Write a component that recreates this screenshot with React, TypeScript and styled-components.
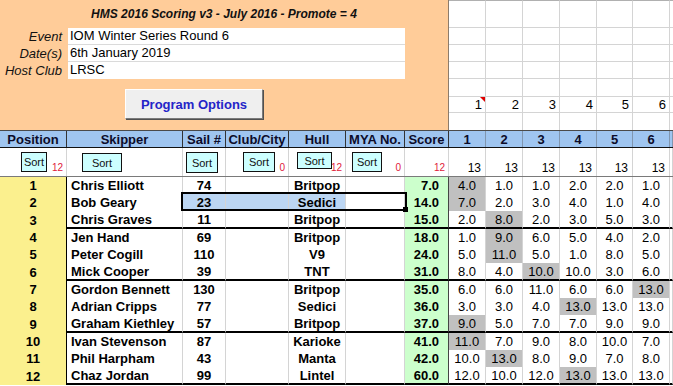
import styled, { createGlobalStyle } from "styled-components";

const GlobalStyle = createGlobalStyle`
  html, body {
    margin: 0;
    padding: 0;
    background: #fff;
  }
  body {
    font-family: "Liberation Sans", Arial, sans-serif;
    font-size: 13px;
    color: #000;
    overflow: hidden;
  }
  * {
    box-sizing: border-box;
  }
`;

const COLS =
  "67px 116px 43px 63px 57px 59px 44px 37px 37px 37px 37px 36px 37px 1fr";
const GRID = "#d4d4d4";

const Sheet = styled.div`
  position: relative;
  width: 673px;
  height: 386px;
  overflow: hidden;
  background: #fff;
`;

const Top = styled.div`
  display: flex;
  height: 130px;
`;

const Banner = styled.div`
  width: 449px;
  flex-shrink: 0;
  background: #ffcc99;
  border-right: 1px solid #8c7b6b;
  display: flex;
  flex-direction: column;
`;

const Title = styled.div`
  height: 28px;
  line-height: 28px;
  text-align: center;
  font-size: 12px;
  font-weight: bold;
  font-style: italic;
  color: #111;
`;

const InfoGrid = styled.div`
  display: grid;
  grid-template-columns: 68px 337px;
  grid-auto-rows: 17px;
`;

const InfoLabel = styled.div`
  text-align: right;
  padding-right: 6px;
  font-style: italic;
  line-height: 17px;
  color: #111;
`;

const InfoValue = styled.div<{ $last?: boolean }>`
  background: #fff;
  padding-left: 2px;
  line-height: 16px;
  border-bottom: 1px solid ${(p) => (p.$last ? "#fff" : "#dadada")};
`;

const OptionsButton = styled.button`
  margin: 10px 0 0 125px;
  width: 138px;
  height: 30px;
  padding: 0;
  background: #efefef;
  border: 1px solid;
  border-color: #fff #7a7a7a #7a7a7a #fff;
  box-shadow: 1px 1px 0 #505050;
  font-family: inherit;
  font-size: 13px;
  font-weight: bold;
  color: #2424c8;
`;

const CornerGrid = styled.div`
  flex: 1;
  display: grid;
  grid-template-columns: 37px 37px 37px 37px 36px 37px 1fr;
  grid-template-rows: 28px 17px 17px 17px 18px 16px 17px;
`;

const CornerCell = styled.div<{ $first?: boolean; $lastRow?: boolean }>`
  position: relative;
  border-right: 1px solid ${GRID};
  border-bottom: ${(p) => (p.$lastRow ? "none" : `1px solid ${GRID}`)};
  border-top: ${(p) => (p.$first ? "1px solid #b0b0b0" : "none")};
  text-align: right;
  padding-right: 3px;
  line-height: 16px;
`;

const CommentMark = styled.span`
  position: absolute;
  top: 0;
  right: 0;
  width: 0;
  height: 0;
  border-top: 5px solid #e00000;
  border-left: 5px solid transparent;
`;

const Row = styled.div<{ $h: number }>`
  display: grid;
  grid-template-columns: ${COLS};
  height: ${(p) => p.$h}px;
`;

const HeadRow = styled(Row)`
  background: #9fc5f0;
  border-top: 1px solid #4a4a4a;
  border-bottom: 1px solid #111;
`;

const HeadCell = styled.div<{ $soft?: boolean }>`
  display: flex;
  align-items: center;
  justify-content: center;
  font-weight: bold;
  color: #0c0c2a;
  border-right: 1px solid ${(p) => (p.$soft ? "#8096b0" : "#333")};
  white-space: nowrap;
`;

const SortRow = styled(Row)`
  border-bottom: 1px solid #7a7a7a;
`;

const SortCell = styled.div`
  display: grid;
  border-right: 1px solid ${GRID};
`;

const SortButton = styled.div<{ $x: number; $y: number; $w: number; $h: number }>`
  grid-area: 1 / 1;
  justify-self: start;
  align-self: start;
  margin-left: ${(p) => p.$x}px;
  margin-top: ${(p) => p.$y}px;
  width: ${(p) => p.$w}px;
  height: ${(p) => p.$h}px;
  background: #ccffff;
  border: 1px solid #111;
  font-size: 11px;
  display: flex;
  align-items: center;
  justify-content: center;
  color: #111;
`;

const Count = styled.span<{ $red?: boolean }>`
  grid-area: 1 / 1;
  justify-self: end;
  align-self: end;
  padding-right: ${(p) => (p.$red ? 3 : 4)}px;
  margin-bottom: 2px;
  font-size: ${(p) => (p.$red ? 10 : 12)}px;
  line-height: 12px;
  color: ${(p) => (p.$red ? "#e0203a" : "#000")};
`;

type Align = "left" | "center" | "right";

const Cell = styled.div<{
  $bg?: string;
  $align?: Align;
  $bold?: boolean;
  $end?: boolean;
  $edge?: string;
}>`
  display: flex;
  align-items: center;
  justify-content: ${(p) =>
    p.$align === "left" ? "flex-start" : p.$align === "right" ? "flex-end" : "center"};
  padding-left: ${(p) => (p.$align === "left" ? 4 : 0)}px;
  padding-right: ${(p) => (p.$align === "right" ? 9 : 0)}px;
  background: ${(p) => p.$bg ?? "transparent"};
  font-weight: ${(p) => (p.$bold ? "bold" : "normal")};
  border-right: 1px solid ${(p) => p.$edge ?? GRID};
  border-bottom: ${(p) => (p.$end ? "2px solid #000" : "none")};
  white-space: nowrap;
  overflow: hidden;
`;

const Selection = styled.div`
  position: absolute;
  left: 181px;
  top: 192px;
  width: 226px;
  height: 19px;
  border: 2px solid #000;
  pointer-events: none;
  &::after {
    content: "";
    position: absolute;
    right: -3px;
    bottom: -3px;
    width: 5px;
    height: 5px;
    background: #000;
  }
`;

const YELLOW = "#fbf08e";
const GREEN = "#ccffcc";
const GREY = "#c0c0c0";
const PICK = "#bcd6f3";

interface Entry {
  skipper: string;
  sail: string;
  hull: string;
  score: string;
  races: string[];
  drop: number;
}

const entries: Entry[] = [
  { skipper: "Chris Elliott", sail: "74", hull: "Britpop", score: "7.0", races: ["4.0", "1.0", "1.0", "2.0", "2.0", "1.0"], drop: 0 },
  { skipper: "Bob Geary", sail: "23", hull: "Sedici", score: "14.0", races: ["7.0", "2.0", "3.0", "4.0", "1.0", "4.0"], drop: 0 },
  { skipper: "Chris Graves", sail: "11", hull: "Britpop", score: "15.0", races: ["2.0", "8.0", "2.0", "3.0", "5.0", "3.0"], drop: 1 },
  { skipper: "Jen Hand", sail: "69", hull: "Britpop", score: "18.0", races: ["1.0", "9.0", "6.0", "5.0", "4.0", "2.0"], drop: 1 },
  { skipper: "Peter Cogill", sail: "110", hull: "V9", score: "24.0", races: ["5.0", "11.0", "5.0", "1.0", "8.0", "5.0"], drop: 1 },
  { skipper: "Mick Cooper", sail: "39", hull: "TNT", score: "31.0", races: ["8.0", "4.0", "10.0", "10.0", "3.0", "6.0"], drop: 2 },
  { skipper: "Gordon Bennett", sail: "130", hull: "Britpop", score: "35.0", races: ["6.0", "6.0", "11.0", "6.0", "6.0", "13.0"], drop: 5 },
  { skipper: "Adrian Cripps", sail: "77", hull: "Sedici", score: "36.0", races: ["3.0", "3.0", "4.0", "13.0", "13.0", "13.0"], drop: 3 },
  { skipper: "Graham Kiethley", sail: "57", hull: "Britpop", score: "37.0", races: ["9.0", "5.0", "7.0", "7.0", "9.0", "9.0"], drop: 0 },
  { skipper: "Ivan Stevenson", sail: "87", hull: "Karioke", score: "41.0", races: ["11.0", "7.0", "9.0", "8.0", "10.0", "7.0"], drop: 0 },
  { skipper: "Phil Harpham", sail: "43", hull: "Manta", score: "42.0", races: ["10.0", "13.0", "8.0", "9.0", "7.0", "8.0"], drop: 1 },
  { skipper: "Chaz Jordan", sail: "99", hull: "Lintel", score: "60.0", races: ["12.0", "10.0", "12.0", "13.0", "13.0", "13.0"], drop: 3 },
];

const headers = ["Position", "Skipper", "Sail #", "Club/City", "Hull", "MYA No.", "Score"];
const races = ["1", "2", "3", "4", "5", "6"];

const sorts = [
  { x: 21, y: 4, w: 26, h: 20, count: "12" },
  { x: 15, y: 5, w: 40, h: 19, count: "" },
  { x: 3, y: 4, w: 32, h: 21, count: "" },
  { x: 17, y: 4, w: 32, h: 20, count: "0" },
  { x: 8, y: 4, w: 35, h: 17, count: "12" },
  { x: 6, y: 4, w: 30, h: 20, count: "0" },
];

const cornerRows = [0, 1, 2, 3, 4, 5, 6];
const cornerCols = [0, 1, 2, 3, 4, 5, 6];

export default function App() {
  return (
    <Sheet>
      <GlobalStyle />
      <Top>
        <Banner>
          <Title>HMS 2016 Scoring v3 - July 2016 - Promote = 4</Title>
          <InfoGrid>
            <InfoLabel>Event</InfoLabel>
            <InfoValue>IOM Winter Series Round 6</InfoValue>
            <InfoLabel>Date(s)</InfoLabel>
            <InfoValue>6th January 2019</InfoValue>
            <InfoLabel>Host Club</InfoLabel>
            <InfoValue $last>LRSC</InfoValue>
          </InfoGrid>
          <OptionsButton>Program Options</OptionsButton>
        </Banner>
        <CornerGrid>
          {cornerRows.map((r) =>
            cornerCols.map((c) => (
              <CornerCell key={`${r}-${c}`} $first={r === 0} $lastRow={r === 6}>
                {r === 5 && c < 6 ? races[c] : null}
                {r === 5 && c === 0 ? <CommentMark /> : null}
              </CornerCell>
            ))
          )}
        </CornerGrid>
      </Top>

      <HeadRow $h={18}>
        {headers.map((h) => (
          <HeadCell key={h}>{h}</HeadCell>
        ))}
        {races.map((r) => (
          <HeadCell key={r} $soft>
            {r}
          </HeadCell>
        ))}
        <HeadCell $soft />
      </HeadRow>

      <SortRow $h={29}>
        {sorts.map((s, i) => (
          <SortCell key={i}>
            <SortButton $x={s.x} $y={s.y} $w={s.w} $h={s.h}>
              Sort
            </SortButton>
            {s.count && <Count $red>{s.count}</Count>}
          </SortCell>
        ))}
        <SortCell>
          <Count $red>12</Count>
        </SortCell>
        {races.map((r) => (
          <SortCell key={r}>
            <Count>13</Count>
          </SortCell>
        ))}
        <SortCell />
      </SortRow>

      {entries.map((e, i) => {
        const end = i % 3 === 2;
        const picked = i === 1;
        return (
          <Row key={e.skipper} $h={end ? 18 : 17}>
            <Cell $bg={YELLOW} $bold $edge="#000">
              {i + 1}
            </Cell>
            <Cell $align="left" $bold $end={end}>
              {e.skipper}
            </Cell>
            <Cell $bold $end={end} $bg={picked ? PICK : undefined}>
              {e.sail}
            </Cell>
            <Cell $end={end} $bg={picked ? PICK : undefined} />
            <Cell $bold $end={end} $bg={picked ? PICK : undefined}>
              {e.hull}
            </Cell>
            <Cell $end={end} />
            <Cell $align="right" $bold $bg={GREEN} $end={end} $edge="#444">
              {e.score}
            </Cell>
            {e.races.map((v, j) => (
              <Cell key={j} $end={end} $bg={j === e.drop ? GREY : undefined}>
                {v}
              </Cell>
            ))}
            <Cell $end={end} />
          </Row>
        );
      })}

      <Selection />
    </Sheet>
  );
}
